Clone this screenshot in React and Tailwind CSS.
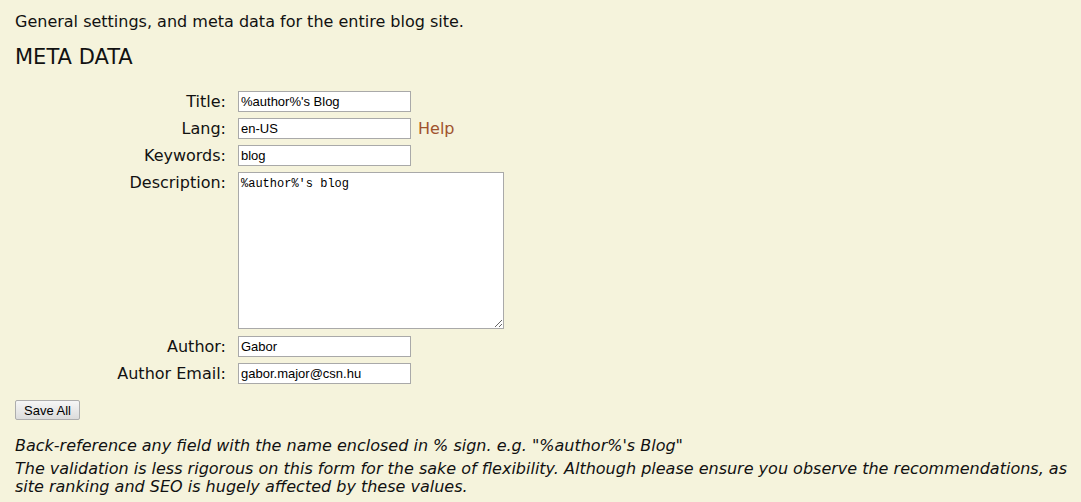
const fields = [
  { label: "Title:", value: "%author%'s Blog" },
  { label: "Lang:", value: "en-US", help: true },
  { label: "Keywords:", value: "blog" },
];

const after = [
  { label: "Author:", value: "Gabor" },
  { label: "Author Email:", value: "gabor.major@csn.hu" },
];

function Field({ label, value, help }) {
  return (
    <>
      <label className="text-right leading-[21px] whitespace-nowrap">{label}</label>
      <div className="flex items-center gap-[7px]">
        <input
          defaultValue={value}
          className="w-[173px] h-[21px] bg-white border border-[#a9a9a9] px-[2px] text-[13px] text-black font-['Liberation_Sans',Arial,sans-serif] outline-none"
        />
        {help && <a className="text-[#a0522d] text-[16px] leading-[21px] cursor-pointer">Help</a>}
      </div>
    </>
  );
}

export default function App() {
  return (
    <div className="min-h-screen bg-[#f5f3dc] text-[#111] font-['DejaVu_Sans',Verdana,sans-serif] text-[16px] pl-[15px] pr-[4px] pt-[12px]">
      <p className="leading-[20px]">General settings, and meta data for the entire blog site.</p>
      <h2 className="text-[21px] leading-[26px] mt-[12px]">META DATA</h2>

      {/* Form */}
      <div className="grid grid-cols-[211px_auto] gap-x-[12px] gap-y-[6px] mt-[21px] items-start">
        {fields.map((f) => (
          <Field key={f.label} {...f} />
        ))}
        <label className="text-right leading-[21px]">Description:</label>
        <div className="mb-[1px]">
          <textarea
            defaultValue="%author%'s blog"
            className="block w-[266px] h-[157px] bg-white border border-[#a9a9a9] px-[2px] py-[2px] text-[12px] text-black font-['Liberation_Mono',Consolas,monospace] outline-none"
          />
        </div>
        {after.map((f) => (
          <Field key={f.label} {...f} />
        ))}
      </div>

      <button className="mt-[16px] h-[20px] px-[8px] text-[13px] font-['Liberation_Sans',Arial,sans-serif] text-black bg-gradient-to-b from-[#f6f6f6] to-[#dcdcdc] border border-[#adadad] rounded-[2px] leading-none">
        Save All
      </button>

      <div className="italic mt-[15px] leading-[18px]">
        <p>Back-reference any field with the name enclosed in % sign. e.g. "%author%'s Blog"</p>
        <p className="mt-[5px] whitespace-nowrap">
          The validation is less rigorous on this form for the sake of flexibility. Although please ensure you observe the recommendations, as
          <br />
          site ranking and SEO is hugely affected by these values.
        </p>
      </div>
    </div>
  );
}
